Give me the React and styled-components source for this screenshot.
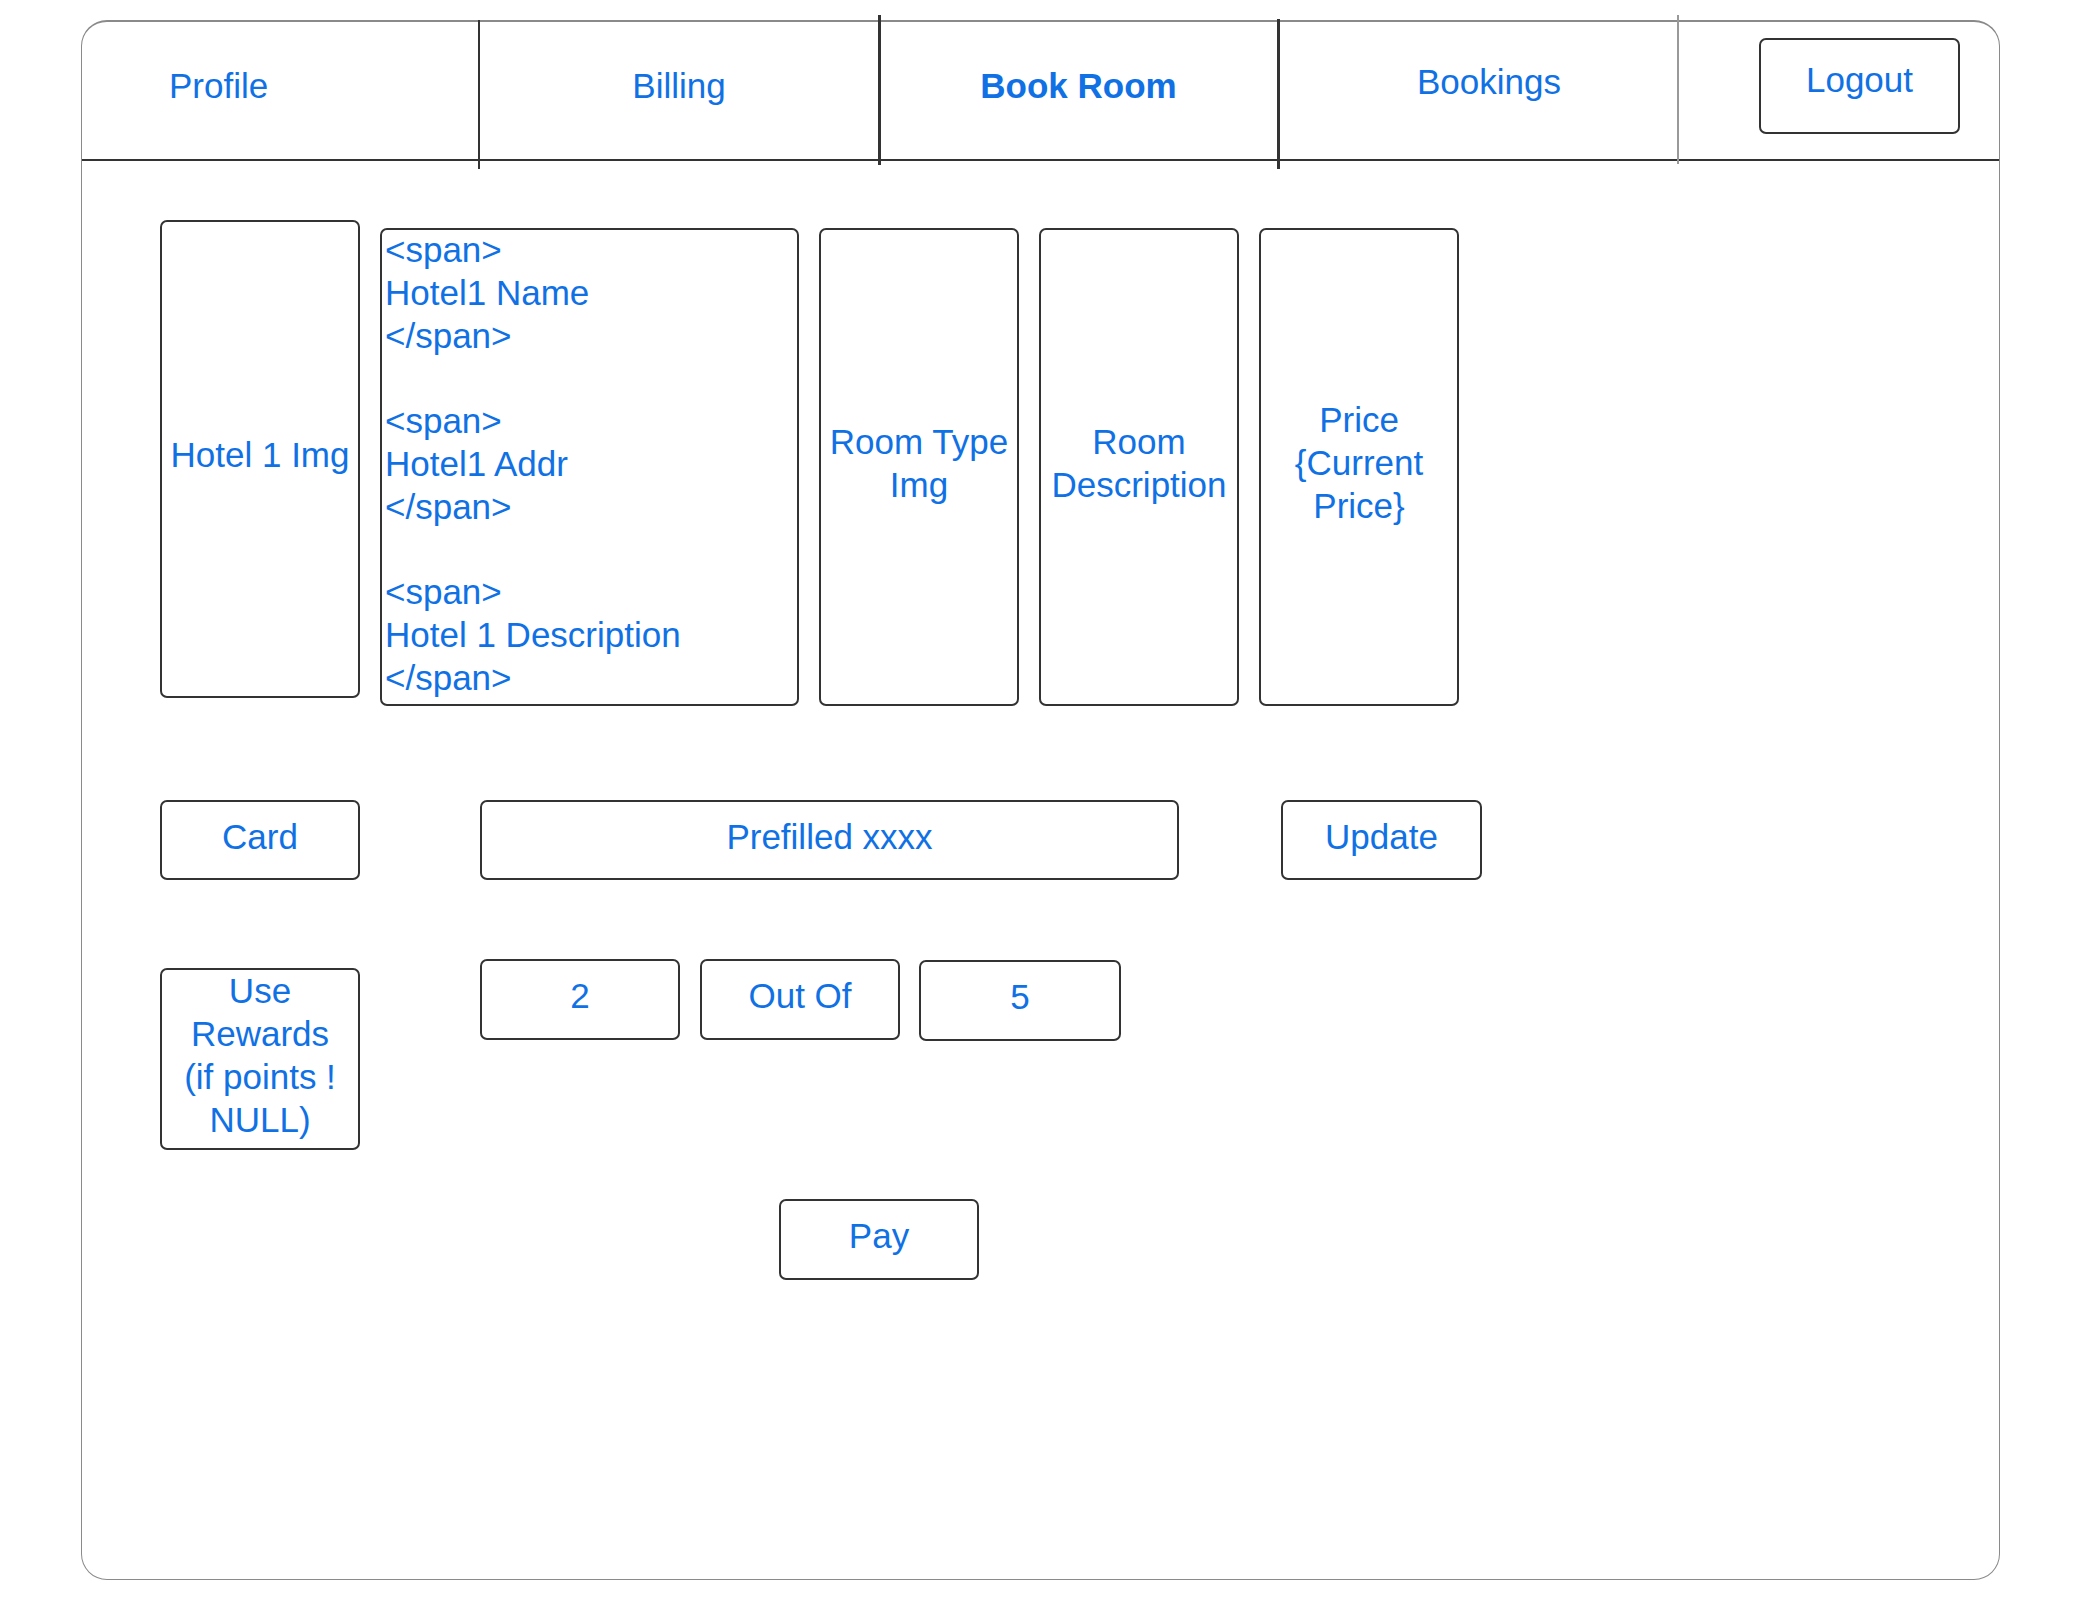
import styled, { createGlobalStyle } from "styled-components";

const GlobalStyle = createGlobalStyle`
  html, body {
    margin: 0;
    padding: 0;
    background: #ffffff;
  }

  body {
    font-family: "Liberation Sans", Arial, sans-serif;
    color: #1071e5;
  }
`;

const Frame = styled.div`
  box-sizing: border-box;
  width: 1919px;
  height: 1560px;
  margin: 20px 0 0 81px;
  border: 1.5px solid #8a8a8a;
  border-top-width: 2px;
  border-radius: 26px;
  display: flex;
  flex-direction: column;
`;

const NavBar = styled.nav`
  display: flex;
  height: 137px;
  border-bottom: 2px solid #333333;
`;

const NavTab = styled.div`
  position: relative;
  box-sizing: border-box;
  width: ${(p) => p.$width}px;
  flex-shrink: 0;
  display: flex;
  align-items: center;
  justify-content: ${(p) => (p.$start ? "flex-start" : "center")};
  padding-left: ${(p) => (p.$start ? 87 : p.$shift || 0)}px;
  padding-bottom: ${(p) => p.$raise || 10}px;
  font-size: 35px;
  font-weight: ${(p) => (p.$active ? 700 : 400)};
  color: #1071e5;

  &::after {
    content: "";
    position: absolute;
    right: ${(p) => -p.$rule.weight / 2}px;
    top: ${(p) => p.$rule.top}px;
    bottom: ${(p) => p.$rule.bottom}px;
    width: ${(p) => p.$rule.weight}px;
    background: ${(p) => p.$rule.color};
  }
`;

const LogoutCell = styled.div`
  flex: 1;
  display: flex;
  align-items: flex-start;
  padding: 16px 0 0 81px;
`;

const LogoutButton = styled.button`
  box-sizing: border-box;
  width: 201px;
  height: 96px;
  border: 2px solid #333333;
  border-radius: 7px;
  background: #ffffff;
  font-family: "Liberation Sans", Arial, sans-serif;
  font-size: 35px;
  color: #1071e5;
  padding: 0 0 12px;
`;

const Content = styled.main`
  display: flex;
  flex-direction: column;
  padding: 59px 0 0 78px;
`;

const HotelRow = styled.section`
  display: flex;
  align-items: flex-start;
  gap: 20px;
`;

const Tile = styled.div`
  box-sizing: border-box;
  width: ${(p) => p.$width || 200}px;
  height: ${(p) => p.$height || 478}px;
  margin-top: ${(p) => p.$offset || 0}px;
  flex-shrink: 0;
  border: 2px solid #333333;
  border-radius: 7px;
  display: flex;
  align-items: center;
  justify-content: center;
  text-align: center;
  padding-bottom: 9px;
  font-size: 35px;
  line-height: 43px;
  color: #1071e5;
`;

const SpanTile = styled.div`
  box-sizing: border-box;
  width: 419px;
  height: 478px;
  margin-top: 8px;
  flex-shrink: 0;
  border: 2px solid #333333;
  border-radius: 7px;
  padding: 0 0 0 3px;
  font-size: 35px;
  line-height: 43px;
  color: #1071e5;
`;

const SpanLine = styled.div`
  height: 42.8px;
  white-space: nowrap;
  &:first-child {
    margin-top: -2px;
  }
`;

const FormRow = styled.div`
  display: flex;
  align-items: flex-start;
  margin-top: ${(p) => p.$top}px;
`;

const Controls = styled.div`
  display: flex;
  align-items: flex-start;
  gap: 20px;
  margin-left: 120px;
`;

const Field = styled.div`
  box-sizing: border-box;
  width: ${(p) => p.$width || 200}px;
  height: ${(p) => p.$height || 80}px;
  margin-top: ${(p) => p.$offset || 0}px;
  margin-left: ${(p) => p.$gap || 0}px;
  flex-shrink: 0;
  border: 2px solid #333333;
  border-radius: 7px;
  display: flex;
  align-items: center;
  justify-content: center;
  text-align: center;
  padding-bottom: 8px;
  font-size: 35px;
  line-height: 43px;
  color: #1071e5;
`;

const PayRow = styled.div`
  display: flex;
  margin-top: 49px;
  padding-left: 619px;
`;

const spanLines = [
  "<span>",
  "Hotel1 Name",
  "</span>",
  "",
  "<span>",
  "Hotel1 Addr",
  "</span>",
  "",
  "<span>",
  "Hotel 1 Description",
  "</span>",
];

const tabs = [
  { label: "Profile", width: 397, start: true, rule: { weight: 1.5, color: "#333", top: -2, bottom: -10 } },
  { label: "Billing", width: 400, rule: { weight: 3, color: "#333", top: -7, bottom: -6 } },
  { label: "Book Room", width: 399, active: true, rule: { weight: 3, color: "#333", top: -3, bottom: -10 } },
  { label: "Bookings", width: 400, raise: 18, shift: 22, rule: { weight: 2, color: "#999", top: -7, bottom: -5 } },
];

function App() {
  return (
    <>
      <GlobalStyle />
      <Frame>
        <NavBar>
          {tabs.map((tab) => (
            <NavTab
              key={tab.label}
              $width={tab.width}
              $start={tab.start}
              $active={tab.active}
              $raise={tab.raise}
              $shift={tab.shift}
              $rule={tab.rule}
            >
              {tab.label}
            </NavTab>
          ))}
          <LogoutCell>
            <LogoutButton>Logout</LogoutButton>
          </LogoutCell>
        </NavBar>

        <Content>
          <HotelRow>
            <Tile>Hotel 1 Img</Tile>
            <SpanTile>
              {spanLines.map((line, i) => (
                <SpanLine key={i}>{line}</SpanLine>
              ))}
            </SpanTile>
            <Tile $offset={8}>
              Room Type
              <br />
              Img
            </Tile>
            <Tile $offset={8}>
              Room
              <br />
              Description
            </Tile>
            <Tile $offset={8}>
              Price
              <br />
              {"{Current"}
              <br />
              {"Price}"}
            </Tile>
          </HotelRow>

          <FormRow $top={94}>
            <Field>Card</Field>
            <Controls>
              <Field $width={699}>Prefilled xxxx</Field>
              <Field $width={201} $gap={82}>
                Update
              </Field>
            </Controls>
          </FormRow>

          <FormRow $top={79}>
            <Field $height={182} $offset={9}>
              Use
              <br />
              Rewards
              <br />
              (if points !
              <br />
              NULL)
            </Field>
            <Controls>
              <Field $height={81}>2</Field>
              <Field $height={81}>Out Of</Field>
              <Field $width={202} $height={81} $offset={1} $gap={-1}>
                5
              </Field>
            </Controls>
          </FormRow>

          <PayRow>
            <Field $height={81}>Pay</Field>
          </PayRow>
        </Content>
      </Frame>
    </>
  );
}

export default App;
